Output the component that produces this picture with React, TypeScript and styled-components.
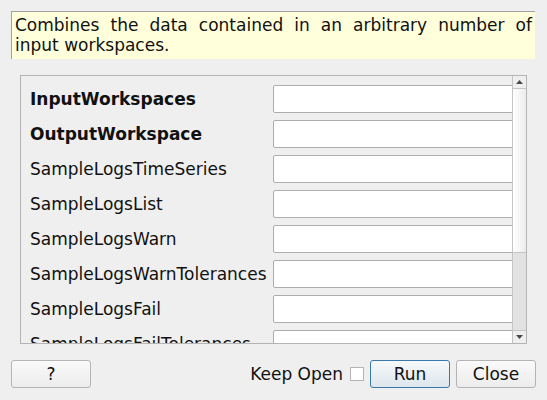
import React from "react";
import styled, { createGlobalStyle } from "styled-components";

const Global = createGlobalStyle`
  html, body { margin: 0; padding: 0; background: #efefef; }
  body { font-family: "DejaVu Sans", "Liberation Sans", sans-serif; font-size: 17px; color: #1a1a1a; }
  * { box-sizing: border-box; }
`;

const Dialog = styled.div`
  width: 547px;
  height: 400px;
  padding: 11px 11px 0 11px;
  display: flex;
  flex-direction: column;
`;

const Description = styled.div`
  width: 524px;
  height: 48px;
  background: #ffffdc;
  border-top: 1px solid #a0a0a0;
  border-left: 1px solid #a0a0a0;
  padding: 3px 3px 0 3px;
  font-size: 17px;
  line-height: 20px;
  text-align: justify;
  color: #111;
`;

const ScrollFrame = styled.div`
  margin: 16px 0 0 9px;
  width: 507px;
  height: 269px;
  border: 1px solid #b4b4b4;
  display: flex;
`;

const Viewport = styled.div`
  flex: 1;
  overflow: hidden;
  padding: 9px 0 0 9px;
  display: flex;
  flex-direction: column;
  gap: 7px;
`;

const Row = styled.div`
  display: grid;
  grid-template-columns: 243px 250px;
  align-items: center;
  height: 28px;
  flex-shrink: 0;
`;

const Label = styled.div<{ $bold?: boolean }>`
  font-weight: ${(p) => (p.$bold ? 700 : 400)};
  white-space: nowrap;
  color: #111;
`;

const Field = styled.div`
  height: 28px;
  background: #fff;
  border: 1px solid #adadad;
  border-radius: 2px;
`;

const ScrollBar = styled.div`
  width: 14px;
  border-left: 1px solid #c4c4c4;
  display: flex;
  flex-direction: column;
  background: #e2e2e2;
`;

const ArrowBtn = styled.div<{ $down?: boolean }>`
  height: 13px;
  flex-shrink: 0;
  display: flex;
  align-items: center;
  justify-content: center;
  background: #efefef;
  ${(p) => (p.$down ? "border-top: 1px solid #c4c4c4;" : "border-bottom: 1px solid #c4c4c4;")}
`;

const Handle = styled.div`
  height: 164px;
  background: linear-gradient(to right, #ffffff, #ececec);
  border-bottom: 1px solid #c4c4c4;
`;

const Track = styled.div`
  flex: 1;
`;

const ButtonRow = styled.div`
  margin-top: 16px;
  display: flex;
  align-items: center;
  height: 28px;
`;

const Button = styled.button<{ $primary?: boolean }>`
  width: 80px;
  height: 28px;
  font-family: inherit;
  font-size: 17px;
  color: #111;
  border-radius: 3px;
  border: 1px solid ${(p) => (p.$primary ? "#3a78a8" : "#b4b4b4")};
  background: ${(p) =>
    p.$primary
      ? "linear-gradient(#f6f9fb, #dde6ec)"
      : "linear-gradient(#fafafa, #ececec)"};
  padding: 0;
`;

const Spacer = styled.div`
  flex: 1;
`;

const KeepOpen = styled.label`
  display: flex;
  align-items: center;
  gap: 7px;
  margin-right: 6px;
  color: #111;
`;

const Check = styled.span`
  width: 14px;
  height: 14px;
  background: #fff;
  border: 1px solid #b4b4b4;
  display: inline-block;
`;

const Gap = styled.div<{ $w: number }>`
  width: ${(p) => p.$w}px;
`;

const rows: { name: string; bold?: boolean }[] = [
  { name: "InputWorkspaces", bold: true },
  { name: "OutputWorkspace", bold: true },
  { name: "SampleLogsTimeSeries" },
  { name: "SampleLogsList" },
  { name: "SampleLogsWarn" },
  { name: "SampleLogsWarnTolerances" },
  { name: "SampleLogsFail" },
  { name: "SampleLogsFailTolerances" },
];

export default function App() {
  return (
    <>
      <Global />
      <Dialog>
        <Description>
          Combines the data contained in an arbitrary number of input workspaces.
        </Description>
        <ScrollFrame>
          <Viewport>
            {rows.map((r) => (
              <Row key={r.name}>
                <Label $bold={r.bold}>{r.name}</Label>
                <Field />
              </Row>
            ))}
          </Viewport>
          <ScrollBar>
            <ArrowBtn>
              <svg width="7" height="4" viewBox="0 0 7 4">
                <path d="M0 4 L3.5 0 L7 4 Z" fill="#4a4a4a" />
              </svg>
            </ArrowBtn>
            <Handle />
            <Track />
            <ArrowBtn $down>
              <svg width="7" height="4" viewBox="0 0 7 4">
                <path d="M0 0 L3.5 4 L7 0 Z" fill="#4a4a4a" />
              </svg>
            </ArrowBtn>
          </ScrollBar>
        </ScrollFrame>
        <ButtonRow>
          <Button>?</Button>
          <Spacer />
          <KeepOpen>
            Keep Open
            <Check />
          </KeepOpen>
          <Button $primary>Run</Button>
          <Gap $w={6} />
          <Button>Close</Button>
        </ButtonRow>
      </Dialog>
    </>
  );
}
